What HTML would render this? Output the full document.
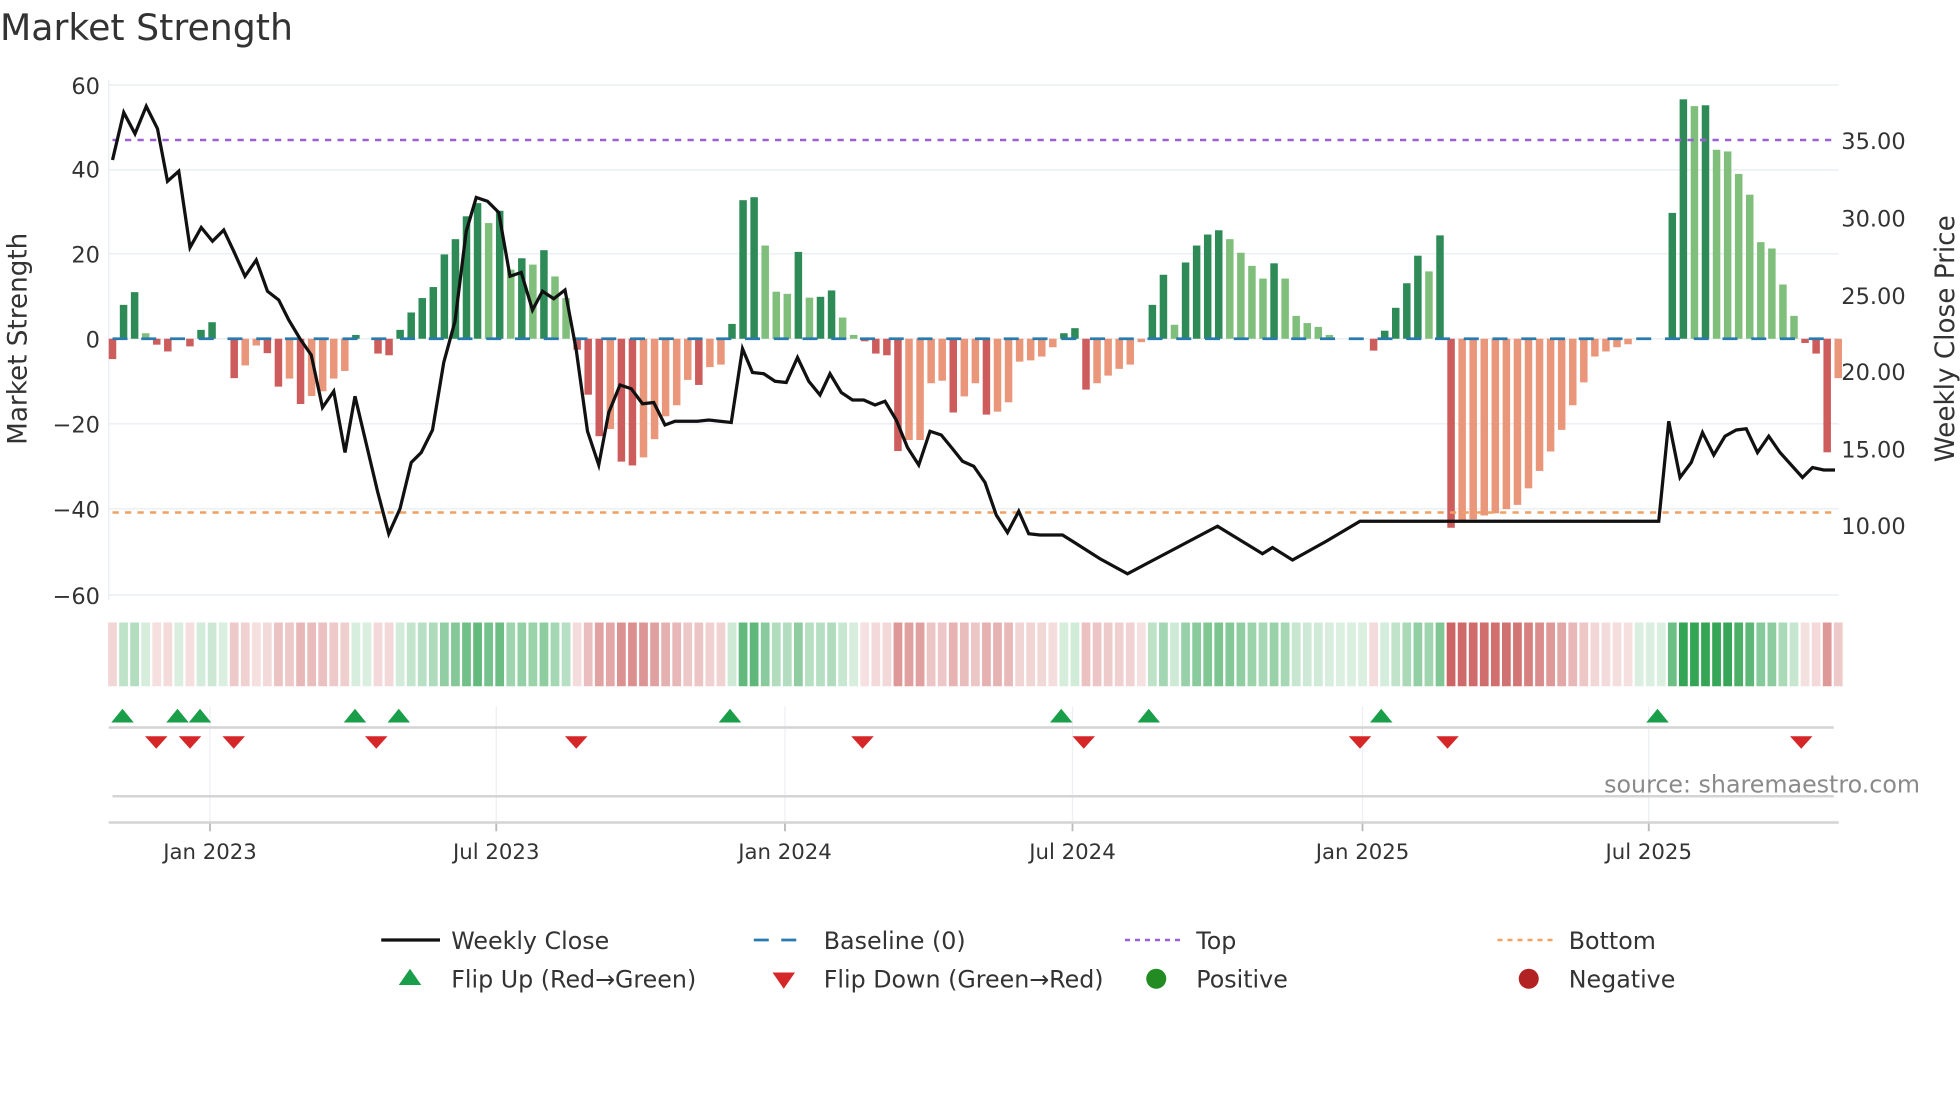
<!DOCTYPE html>
<html><head><meta charset="utf-8"><style>
html,body{margin:0;padding:0;background:#fff;}
svg{display:block;font-family:"DejaVu Sans","Liberation Sans",sans-serif;}
</style></head><body>
<svg id="c" width="1960" height="1102" viewBox="0 0 1568 881.6" xmlns="http://www.w3.org/2000/svg">
<rect width="1568" height="882" fill="#fff"/>
<text x="0" y="32" font-size="29" fill="#333">Market Strength</text>
<g id="grid" stroke="#eceff3" stroke-width="1.2"></g>
<line x1="87" y1="64" x2="87" y2="480" stroke="#eceff3" stroke-width="1.2"/>
<g id="bars"></g>
<line x1="90" y1="271" x2="1468" y2="271" stroke="#2a7ab0" stroke-width="2.2" stroke-dasharray="12,11"/>
<line x1="90" y1="112" x2="1468" y2="112" stroke="#9b5fd6" stroke-width="2" stroke-dasharray="5,5"/>
<line x1="90" y1="410" x2="1468" y2="410" stroke="#f0a060" stroke-width="2" stroke-dasharray="5,5"/>
<polyline id="price" fill="none" stroke="#111" stroke-width="2.6" stroke-linejoin="miter"/>
<g font-size="18" fill="#333" text-anchor="end">
<text x="80" y="75">60</text><text x="80" y="142">40</text><text x="80" y="210">20</text><text x="80" y="278">0</text><text x="80" y="346">−20</text><text x="80" y="414">−40</text><text x="80" y="483">−60</text>
</g>
<g font-size="18" fill="#333">
<text x="1473" y="119">35.00</text><text x="1473" y="181">30.00</text><text x="1473" y="243">25.00</text><text x="1473" y="304">20.00</text><text x="1473" y="366">15.00</text><text x="1473" y="427">10.00</text>
</g>
<text transform="translate(21,271) rotate(-90)" font-size="21" fill="#333" text-anchor="middle">Market Strength</text>
<text transform="translate(1563,271) rotate(-90)" font-size="21" fill="#333" text-anchor="middle">Weekly Close Price</text>
<g id="strip"></g>
<g id="vgrid" stroke="#eceff3" stroke-width="1"></g>
<line x1="87" y1="582" x2="1467" y2="582" stroke="#d4d4d4" stroke-width="2"/>
<line x1="90" y1="637" x2="1467" y2="637" stroke="#d4d4d4" stroke-width="2"/>
<line x1="87" y1="658" x2="1471" y2="658" stroke="#d4d4d4" stroke-width="2"/>
<g id="flips"></g>
<text x="1536" y="634" font-size="19" fill="#8a8a8a" text-anchor="end">source: sharemaestro.com</text>
<g font-size="17" fill="#333" text-anchor="middle">
<text x="168" y="687">Jan 2023</text><text x="397" y="687">Jul 2023</text><text x="628" y="687">Jan 2024</text><text x="858" y="687">Jul 2024</text><text x="1090" y="687">Jan 2025</text><text x="1319" y="687">Jul 2025</text>
</g>
<g font-size="19" fill="#333">
<line x1="305" y1="752" x2="352" y2="752" stroke="#111" stroke-width="2.6"/>
<text x="361" y="759">Weekly Close</text>
<line x1="603" y1="752" x2="647" y2="752" stroke="#2a7ab0" stroke-width="2.2" stroke-dasharray="12,10"/>
<text x="659" y="759">Baseline (0)</text>
<line x1="900" y1="752" x2="945" y2="752" stroke="#9b5fd6" stroke-width="2" stroke-dasharray="4,4"/>
<text x="957" y="759">Top</text>
<line x1="1198" y1="752" x2="1243" y2="752" stroke="#f0a060" stroke-width="2" stroke-dasharray="4,4"/>
<text x="1255" y="759">Bottom</text>
<polygon points="319,788 337,788 328,775" fill="#1a9e4a"/>
<text x="361" y="790">Flip Up (Red→Green)</text>
<polygon points="618,778 636,778 627,791" fill="#d62728"/>
<text x="659" y="790">Flip Down (Green→Red)</text>
<circle cx="925" cy="783" r="8" fill="#228b22"/>
<text x="957" y="790">Positive</text>
<circle cx="1223" cy="783" r="8" fill="#b22222"/>
<text x="1255" y="790">Negative</text>
</g>
</svg>
<script>
(function(){
var NS="http://www.w3.org/2000/svg";
function el(t,a,p){var e=document.createElementNS(NS,t);for(var k in a)e.setAttribute(k,a[k]);p.appendChild(e);return e;}
var g=document.getElementById('grid');
[68,136,203,271,339,407,476].forEach(function(y){el('line',{x1:87,y1:y,x2:1471,y2:y},g);});
var v=[-4.8,8,11,1.3,-1.4,-3,0.2,-1.8,2.1,3.9,0,-9.3,-6.3,-1.6,-3.4,-11.3,-9.4,-15.4,-13.5,-12.4,-9.4,-7.6,0.9,0,-3.5,-3.9,2.1,6.2,9.6,12.2,19.9,23.5,28.9,32,27.3,30.2,16.3,19,17.5,20.9,14.7,9.6,-2.6,-13.2,-23,-21.3,-29,-29.9,-28,-23.7,-18.3,-15.7,-9.7,
-10.9,-6.7,-6.1,3.5,32.7,33.4,22,11.1,10.6,20.5,9.7,9.9,11.4,5,0.9,-0.6,-3.5,-3.9,-26.5,-23.9,-23.9,-10.5,-9.9,-17.4,-13.6,-10.5,-17.9,-17.2,-15,-5.4,-5.1,-4.2,-2,1.3,2.5,-12,-10.5,-8.7,-7.1,-6.1,-0.8,8,15.1,3.3,18,22,24.6,25.6,23.5,20.3,17.2,14.2,17.8,14.2,5.4,
3.7,2.8,0.9,0,0,0,-2.8,1.9,7.3,13.1,19.6,15.9,24.4,-44.6,-42.8,-42.6,-41.7,-41.2,-40.2,-39.2,-35.3,-31.2,-26.6,-21.5,-15.7,-10.3,-4.2,-3,-2,-1.3,0,0,0,29.7,56.5,54.9,55.1,44.6,44.2,38.9,34,22.8,21.3,12.8,5.4,-1,-3.5,-26.8,-9.3];
var b=document.getElementById('bars'),s=document.getElementById('strip');
var K=3.39,sp=8.85;
function mix(c,t){var w=[255,255,255];return 'rgb('+c.map(function(x,i){return Math.round(w[i]+(x-w[i])*t);}).join(',')+')';}
for(var i=0;i<v.length;i++){
 var x=90+i*sp,val=v[i],p=i?v[i-1]:0,col;
 if(val>=0) col=(val>=p)?'#2e8b57':'#7fbf7b'; else col=(val<p)?'#cd5c5c':'#e9967a';
 var h=Math.abs(val)*K;
 if(h>0.3) el('rect',{x:x-3,y:val>=0?271-h:271,width:6,height:h,fill:col},b);
 var t=Math.min(1,0.18+Math.abs(val)/55);
 var sc=val>=0?mix([52,165,85],t):mix([205,100,100],t);
 el('rect',{x:x-3.5,y:498,width:7,height:51,fill:sc},s);
}
var pts=[[90,128],[99,90],[108,107],[117,85],[126,103],[134,145],[143,137],[152,198],[161,182],[170,193],[179,184],[187,201],[196,221],[205,208],[214,233],[223,240],[231,256],[240,271],[249,284],[258,326],[267,313],[276,362],[284,317],[293,355],[302,393],[311,427],[320,407],[329,370],[337,362],[346,344],[355,290],[364,257],[373,185],[381,158],[390,161],[399,170],[408,221],[417,218],[426,248],[434,233],[443,239],[452,232],[461,280],[470,345],[479,372],[487,330],[496,308],[505,311],[514,323],[523,322],[532,340],[540,337],[549,337],[558,337],[567,336],[576,337],[585,338],[594,279],[602,298],[611,299],[620,305],[629,306],[638,286],[647,305],[656,316],[664,299],[673,314],[682,320],[691,320],[700,324],[708,321],[717,336],[726,358],[735,372],[744,345],[753,348],[762,359],[770,369],[779,373],[788,386],[797,412],[806,426],[815,409],[823,427],[832,428],[850,428],[858,433],[880,447],[902,459],[938,440],[974,421],[992,432],[1010,443],[1018,438],[1034,448],[1061,433],[1088,417],[1327,417],[1335,337],[1344,382],[1353,370],[1362,346],[1371,364],[1380,349],[1389,344],[1397,343],[1406,362],[1415,349],[1424,362],[1442,382],[1450,374],[1459,376],[1468,376]];
document.getElementById('price').setAttribute('points',pts.map(function(q){return q.join(',');}).join(' '));
var vg=document.getElementById('vgrid');
[168,397,628,858,1090,1319].forEach(function(x){el('line',{x1:x,y1:565,x2:x,y2:658},vg);el('line',{x1:x,y1:658,x2:x,y2:665,stroke:'#bbb','stroke-width':1.5},vg);});
var f=document.getElementById('flips');
[98,142,160,284,319,584,849,919,1105,1326].forEach(function(x){el('polygon',{points:(x-9)+',578 '+(x+9)+',578 '+x+',567',fill:'#1a9e4a'},f);});
[125,152,187,301,461,690,867,1088,1158,1441].forEach(function(x){el('polygon',{points:(x-9)+',589 '+(x+9)+',589 '+x+',599',fill:'#d62728'},f);});
})();
</script>
</body></html>
